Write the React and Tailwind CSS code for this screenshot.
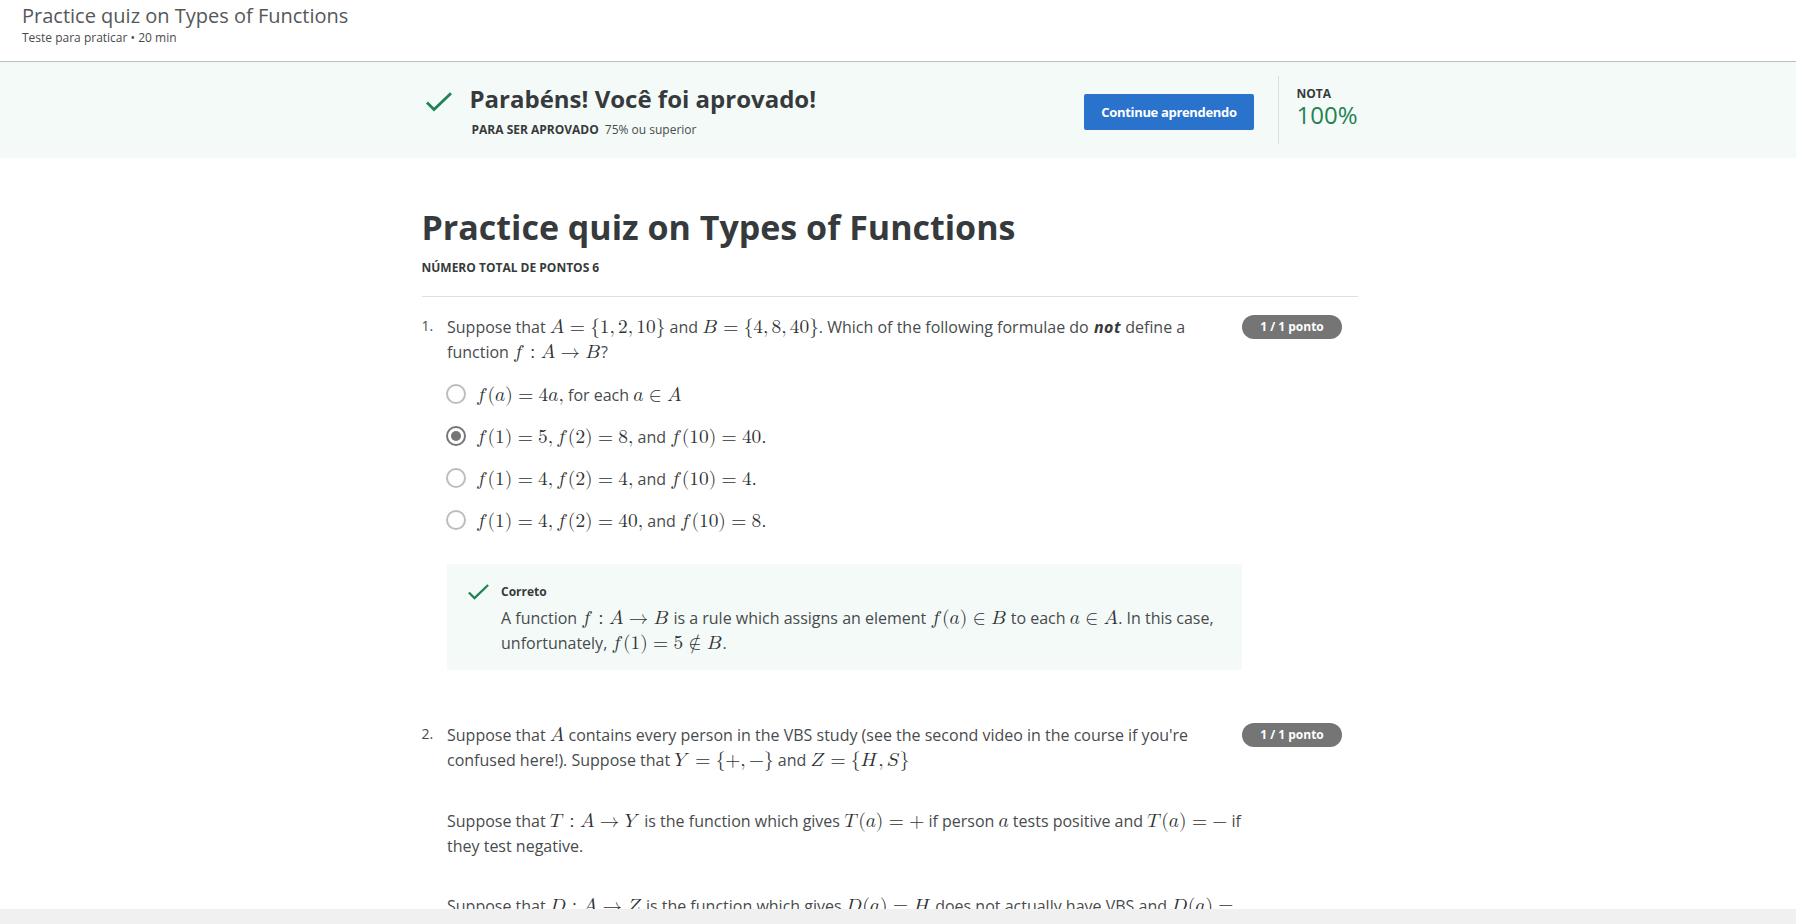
import React from "react";

/* Advance widths (em) of the math glyphs, italic correction included. */
const WIDTHS = {
  A: 0.75, B: 0.8088, D: 0.8556, H: 0.9125, S: 0.6712, T: 0.7236, Y: 0.8028, Z: 0.7542,
  a: 0.5286, f: 0.5972,
  "(": 0.3889, ")": 0.3889, "{": 0.5, "}": 0.5,
  ",": 0.2778, ".": 0.2778, ":": 0.2778,
  "=": 0.7778, "+": 0.7778, "−": 0.7778, "→": 1, "∈": 0.6667, "∉": 0.6667,
};
const RELATIONS = "=→∈∉:";

/* Inline formula: one box per glyph, with relation and punctuation spacing. */
function M({ children }) {
  const chars = [...children];
  return (
    <span className="inline-block whitespace-nowrap font-['Latin_Modern_Math','Liberation_Serif',serif] text-[19.36px] leading-[0] text-[#303335]">
      {chars.map((c, i) => {
        const letter = /[A-Za-z]/.test(c);
        const relation = RELATIONS.includes(c);
        const space = relation
          ? "mx-[0.2778em]"
          : c === "," && i < chars.length - 1
            ? "mr-[0.1667em]"
            : "";
        return (
          <span
            key={i}
            className={`inline-block ${letter ? "[text-transform:math-auto]" : ""} ${space}`}
            style={{ width: `${WIDTHS[c] ?? 0.5}em` }}
          >
            {c}
          </span>
        );
      })}
    </span>
  );
}

function Line({ children }) {
  return <div className="h-[25px] whitespace-nowrap text-base leading-[25px] text-[#484b4d]">{children}</div>;
}

function Pill() {
  return (
    <div className="flex h-6 w-[100px] shrink-0 items-center justify-center rounded-full bg-[#757575] text-xs font-bold text-white">
      1 / 1 ponto
    </div>
  );
}

function Check({ className }) {
  return (
    <svg viewBox="0 0 26 20" fill="none" stroke="#1f8354" strokeWidth="2.8" className={className}>
      <path d="M1 10.6 8 17.6 25 1.2" />
    </svg>
  );
}

function Option({ selected, children }) {
  return (
    <label className="flex h-[42px] items-start pt-2.5">
      <span
        className={
          selected
            ? "-ml-px flex size-5 items-center justify-center rounded-full border-2 border-[#757575]"
            : "-ml-px size-5 rounded-full border-2 border-[#bdbdbd]"
        }
      >
        {selected && <span className="size-2.5 rounded-full bg-[#757575]" />}
      </span>
      <span className="-mt-[1.5px] ml-2.5 whitespace-nowrap text-base leading-[25px] text-[#484b4d]">{children}</span>
    </label>
  );
}

export default function App() {
  return (
    <div className="flex h-[924px] flex-col overflow-hidden bg-white font-['Open_Sans',sans-serif] text-[#373a3c]">
      <header className="h-[62px] shrink-0 border-b border-[#bbbdbd] pl-[22px] pt-1">
        <div className="text-xl leading-6 text-[#55585a]">Practice quiz on Types of Functions</div>
        <div className="mt-px text-xs leading-[18px] text-[#484b4d]">Teste para praticar • 20 min</div>
      </header>

      <section className="flex h-24 shrink-0 items-start bg-[#f4faf8] pl-[426px]">
        <Check className="mt-[30px] h-5 w-[26px]" />
        <div className="ml-[17.5px] mt-[21px] w-[614.5px]">
          <h2 className="text-2xl font-bold leading-8">Parabéns! Você foi aprovado!</h2>
          <div className="ml-0.5 mt-1.5 flex gap-1.5 text-xs leading-[18px]">
            <span className="font-bold">PARA SER APROVADO</span>
            <span className="text-[#484b4d]">75% ou superior</span>
          </div>
        </div>
        <button className="mt-8 h-9 w-[170px] rounded-[2px] bg-[#2a73cc] pt-px text-[13px] font-bold tracking-[-0.33px] text-white">
          Continue aprendendo
        </button>
        <div className="ml-6 mt-3.5 h-[68px] border-l border-[#dcdfde] pl-[17.5px] pt-[9px]">
          <div className="text-xs font-bold leading-[18px]">NOTA</div>
          <div className="text-2xl leading-6 text-[#1f8354]">100%</div>
        </div>
      </section>

      <main className="min-h-0 w-[1358px] flex-1 overflow-hidden pl-[421px] pt-[47px]">
        <h1 className="ml-[0.5px] text-[34px] font-bold leading-[44px]">Practice quiz on Types of Functions</h1>
        <div className="ml-[0.5px] mt-2.5 text-xs font-bold leading-[18px]">NÚMERO TOTAL DE PONTOS 6</div>
        <hr className="ml-px mt-[19px] border-[#dfdfdf]" />

        <article className="mt-[17px] flex">
          <div className="w-[26px] shrink-0 pl-[0.5px] text-sm leading-[23px] text-[#484b4d]">1.</div>
          <div className="w-[795px] shrink-0 pt-px">
            <Line>
              Suppose that <M>{"A={1,2,10}"}</M> and <M>{"B={4,8,40}"}</M>. Which of the following formulae do{" "}
              <strong className="ml-px tracking-[0.5px] text-[#373a3c]"><em>not</em></strong> define a
            </Line>
            <Line>function <M>f:A→B</M>?</Line>
            <div className="mt-[9px]">
              <Option><M>f(a)=4a,</M> for each <M>a∈A</M></Option>
              <Option selected><M>f(1)=5,f(2)=8,</M> and <M>f(10)=40.</M></Option>
              <Option><M>f(1)=4,f(2)=4,</M> and <M>f(10)=4.</M></Option>
              <Option><M>f(1)=4,f(2)=40,</M> and <M>f(10)=8.</M></Option>
            </div>
            <div className="mt-[22px] flex h-[106px] bg-[#f4faf8] pl-[21px]">
              <Check className="mt-5 h-4 w-[21px]" />
              <div className="ml-3 mt-[19px]">
                <div className="text-xs font-bold leading-[18px]">Correto</div>
                <div className="mt-[5px]">
                  <Line>
                    A function <M>f:A→B</M> is a rule which assigns an element <M>f(a)∈B</M> to each <M>a∈A</M>. In this case,
                  </Line>
                  <Line>unfortunately, <M>f(1)=5∉B</M>.</Line>
                </div>
              </div>
            </div>
          </div>
          <div className="mt-px"><Pill /></div>
        </article>

        <article className="mt-[53px] flex">
          <div className="w-[26px] shrink-0 pl-[0.5px] text-sm leading-[22px] text-[#484b4d]">2.</div>
          <div className="w-[795px] shrink-0">
            <Line>
              Suppose that <M>A</M> contains every person in the VBS study (see the second video in the course if you're
            </Line>
            <Line>
              confused here!). Suppose that <M>{"Y={+,−}"}</M> and <M>{"Z={H,S}"}</M>
            </Line>
            <div className="mt-9">
              <Line>
                Suppose that <M>T:A→Y</M> is the function which gives <M>T(a)=+</M> if person <M>a</M> tests positive and <M>T(a)=−</M> if
              </Line>
              <Line>they test negative.</Line>
            </div>
            <div className="mt-[35px]">
              <Line>
                Suppose that <M>D:A→Z</M> is the function which gives <M>D(a)=H</M> does not actually have VBS and <M>D(a)=</M>
              </Line>
            </div>
          </div>
          <Pill />
        </article>
      </main>

      <footer className="h-[15px] shrink-0 bg-[#f0f0f0]" />
    </div>
  );
}
